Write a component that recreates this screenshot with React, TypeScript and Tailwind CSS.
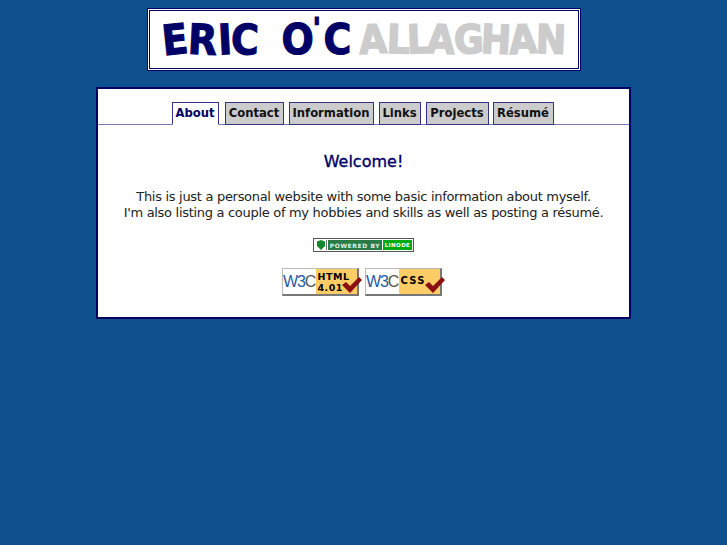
const tabs = [
  { label: "About", cls: "w-[47px]" },
  { label: "Contact", cls: "ml-[6px] w-[59px]" },
  { label: "Information", cls: "ml-[5px] w-[85px]" },
  { label: "Links", cls: "ml-[5px] w-[42px]" },
  { label: "Projects", cls: "ml-[5px] w-[63px]" },
  { label: "Résumé", cls: "ml-[4px] w-[61px]" },
];

const eric = [
  ["E", "-rotate-6", "w-[26px]"],
  ["R", "rotate-3", "w-[30px]"],
  ["I", "-rotate-3", "w-[13px]"],
  ["C", "rotate-2", "w-[26px]"],
];
const allaghan = [
  ["A", "-rotate-3", "w-[28px]"],
  ["L", "rotate-2", "w-[20px]"],
  ["L", "-rotate-2", "w-[20px]"],
  ["A", "rotate-3", "w-[27px]"],
  ["G", "-rotate-2", "w-[27px]"],
  ["H", "rotate-3", "w-[28px]"],
  ["A", "-rotate-3", "w-[27px]"],
  ["N", "rotate-2", "w-[27px]"],
];

function Check() {
  return (
    <svg width="22" height="20" viewBox="0 0 22 20" className="absolute right-[-6px] bottom-[-1px]">
      <path d="M1 10 L5 7 L9 11 L18 2 L21 5 L9 18 Z" fill="#8b0f0f" />
    </svg>
  );
}

function W3c({ children }: { children: React.ReactNode }) {
  return (
    <div className="relative flex h-[28px] w-[77px] border border-[#bbbbbb] border-r-[2px] border-r-[#777777] border-b-[2px] border-b-[#777777] bg-white">
      <div className="flex w-[33px] items-center justify-center font-['Liberation_Sans',sans-serif] text-[16px] leading-none tracking-[-1.2px] text-[#1f5c9e]">
        W3<span className="text-[#555555]">C</span>
      </div>
      <div className="flex-1 bg-[#ffcc66] pl-[2px] pt-[2px] font-['DejaVu_Sans',sans-serif] text-[9.5px] font-bold leading-[11px] tracking-[0.5px] text-black">
        {children}
      </div>
      <Check />
    </div>
  );
}

function Linode() {
  return (
    <div className="flex h-[14px] w-[101px] border border-[#555555] bg-white p-[1px]">
      <div className="flex w-[12px] items-center justify-center border-r border-[#777777]">
        <svg width="10" height="10" viewBox="0 0 10 10">
          <path d="M1 1.5 L5 0 L9 1.5 L9 6 L5 10 L1 6 Z" fill="#11882b" />
        </svg>
      </div>
      <div className="ml-[1px] flex w-[54px] items-center justify-center bg-[#2a7a45] font-['DejaVu_Sans',sans-serif] text-[6px] font-bold tracking-[0.6px] whitespace-nowrap text-[#dff3e2]">
        POWERED BY
      </div>
      <div className="ml-[1px] flex flex-1 items-center justify-center bg-[#00aa11] font-['DejaVu_Sans',sans-serif] text-[5.5px] font-bold tracking-[0.4px] text-white">
        LINODE
      </div>
    </div>
  );
}

export default function App() {
  return (
    <div className="min-h-[545px] bg-[#0e4f8d] pt-2 font-['DejaVu_Sans',sans-serif]">
      <div className="mx-auto h-[63px] w-[434px] border border-[#000066] bg-white p-[1px]">
        <div className="flex h-full items-center border border-[#000066] pl-[12px] text-[38px] leading-none font-bold">
          <div className="flex text-[#000066] [-webkit-text-stroke:1px_#000066]">
            {eric.map(([l, r, w], i) => (
              <span key={i} className={`inline-block ${r} ${w} scale-y-110`}>
                {l}
              </span>
            ))}
          </div>
          <div className="ml-[25px] flex text-[#000066] [-webkit-text-stroke:1px_#000066]">
            <span className="inline-block w-[31px] scale-y-110">O</span>
            <span className="mt-[-6px] inline-block w-[11px] text-[28px]">'</span>
            <span className="inline-block w-[30px] scale-y-110">C</span>
          </div>
          <div className="ml-[5px] flex text-[36px] text-[#cccccc] [-webkit-text-stroke:1.5px_#cccccc]">
            {allaghan.map(([l, r, w], i) => (
              <span key={i} className={`inline-block ${r} ${w} scale-y-110`}>
                {l}
              </span>
            ))}
          </div>
        </div>
      </div>

      <div className="mx-auto mt-[16px] h-[232px] w-[535px] border-2 border-[#000066] bg-white">
        <div className="flex h-[36px] items-end justify-center border-b border-[#7777bb] pt-[13px] pr-[2px]">
          {tabs.map((t, i) => (
            <div
              key={t.label}
              className={`mb-[-1px] flex h-[23px] items-center justify-center border border-[#333388] pt-[1px] text-[11.6px] font-bold whitespace-nowrap ${t.cls} ${
                i === 0 ? "border-b-white bg-white text-[#000066]" : "bg-[#cccccc] text-[#111111]"
              }`}
            >
              {t.label}
            </div>
          ))}
        </div>

        <h1 className="mt-[27px] text-center text-[16px] leading-[20px] text-[#000066] [-webkit-text-stroke:0.35px_#000066]">Welcome!</h1>
        <p className="mt-[17px] text-center text-[13px] leading-[16px] tracking-[-0.3px] text-[#222222]">
          This is just a personal website with some basic information about myself.
          <br />
          I'm also listing a couple of my hobbies and skills as well as posting a résumé.
        </p>

        <div className="mt-[17px] flex justify-center">
          <Linode />
        </div>
        <div className="mt-[16px] flex justify-center gap-[6px] pr-[4px]">
          <W3c>
            HTML
            <br />
            4.01
          </W3c>
          <W3c>
            <div className="pt-[4px] text-[10px] tracking-[1.2px]">CSS</div>
          </W3c>
        </div>
      </div>
    </div>
  );
}
